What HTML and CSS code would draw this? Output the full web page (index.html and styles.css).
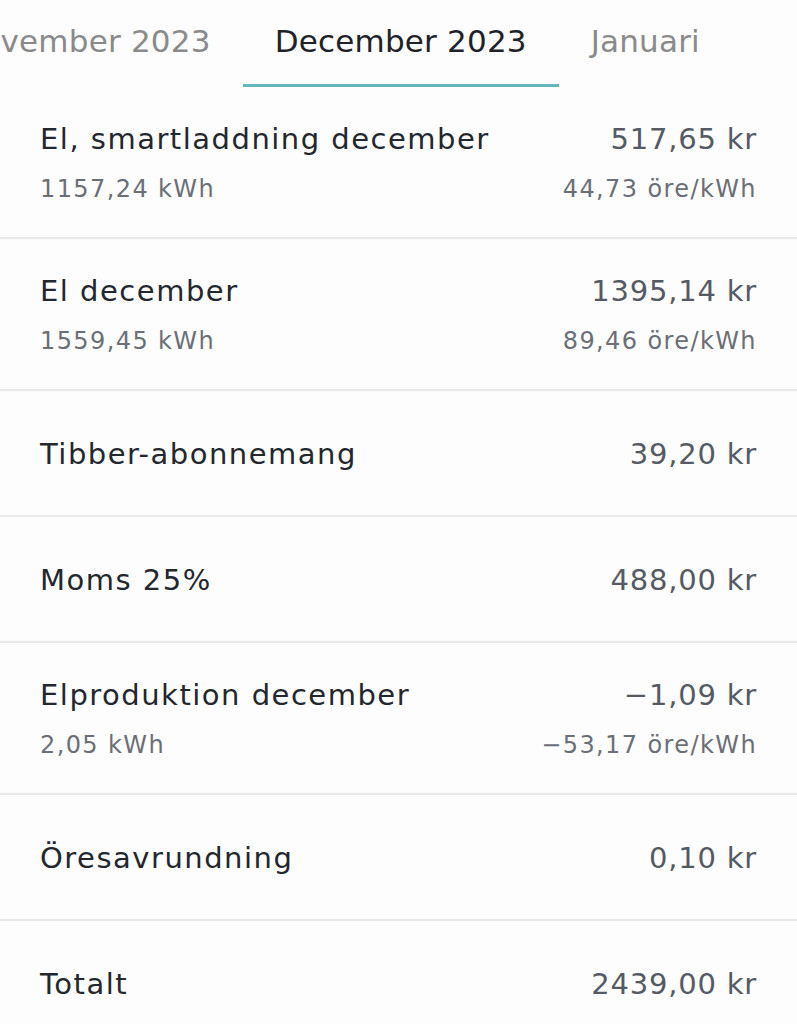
FILE: index.html
```html
<!DOCTYPE html>
<html lang="sv">
<head>
<meta charset="utf-8">
<link rel="stylesheet" href="styles.css">
</head>
<body>
<div class="tabs">
  <div class="tabs-strip">
    <div class="tab">November 2023</div>
    <div class="tab active">December 2023</div>
    <div class="tab">Januari</div>
  </div>
</div>
<div class="list">
  <div class="row">
    <div class="line"><span class="title">El, smartladdning december</span><span class="amount">517,65 kr</span></div>
    <div class="line sub"><span>1157,24 kWh</span><span>44,73 öre/kWh</span></div>
  </div>
  <div class="row">
    <div class="line"><span class="title">El december</span><span class="amount">1395,14 kr</span></div>
    <div class="line sub"><span>1559,45 kWh</span><span>89,46 öre/kWh</span></div>
  </div>
  <div class="row single">
    <div class="line"><span class="title">Tibber-abonnemang</span><span class="amount">39,20 kr</span></div>
  </div>
  <div class="row single">
    <div class="line"><span class="title">Moms 25%</span><span class="amount">488,00 kr</span></div>
  </div>
  <div class="row">
    <div class="line"><span class="title">Elproduktion december</span><span class="amount">−1,09 kr</span></div>
    <div class="line sub"><span>2,05 kWh</span><span>−53,17 öre/kWh</span></div>
  </div>
  <div class="row single">
    <div class="line"><span class="title">Öresavrundning</span><span class="amount">0,10 kr</span></div>
  </div>
  <div class="row single total">
    <div class="line"><span class="title">Totalt</span><span class="amount">2439,00 kr</span></div>
  </div>
</div>
</body>
</html>
```
FILE: styles.css
```css
html, body {
  margin: 0;
  padding: 0;
  background: #fdfdfd;
}
body {
  font-family: "DejaVu Sans", "Open Sans", sans-serif;
  color: #23272e;
  width: 797px;
  overflow: hidden;
}
.tabs {
  height: 87px;
  overflow: hidden;
}
.tabs-strip {
  display: flex;
  margin-left: -74px;
  height: 87px;
}
.tab {
  flex: none;
  padding: 0 32px;
  font-size: 31px;
  line-height: 82px;
  letter-spacing: 0.2px;
  color: #8a8a8a;
  white-space: nowrap;
  box-sizing: border-box;
  height: 87px;
}
.tab.active {
  color: #1f2328;
  border-bottom: 3px solid #62b6c2;
}
.row {
  padding: 34px 40px 33px;
  border-bottom: 2px solid #e9e9e9;
}
.row.single {
  padding: 45px 40px 43px;
}
.row.total {
  border-bottom: none;
}
.line {
  display: flex;
  justify-content: space-between;
  align-items: center;
  font-size: 29px;
  line-height: 36px;
}
.title {
  color: #23272e;
  letter-spacing: 1.5px;
}
.amount {
  color: #555a63;
  letter-spacing: 0.8px;
}
.line.sub {
  margin-top: 17px;
  font-size: 24px;
  line-height: 30px;
  letter-spacing: 1.4px;
  color: #6b6f76;
}
```
